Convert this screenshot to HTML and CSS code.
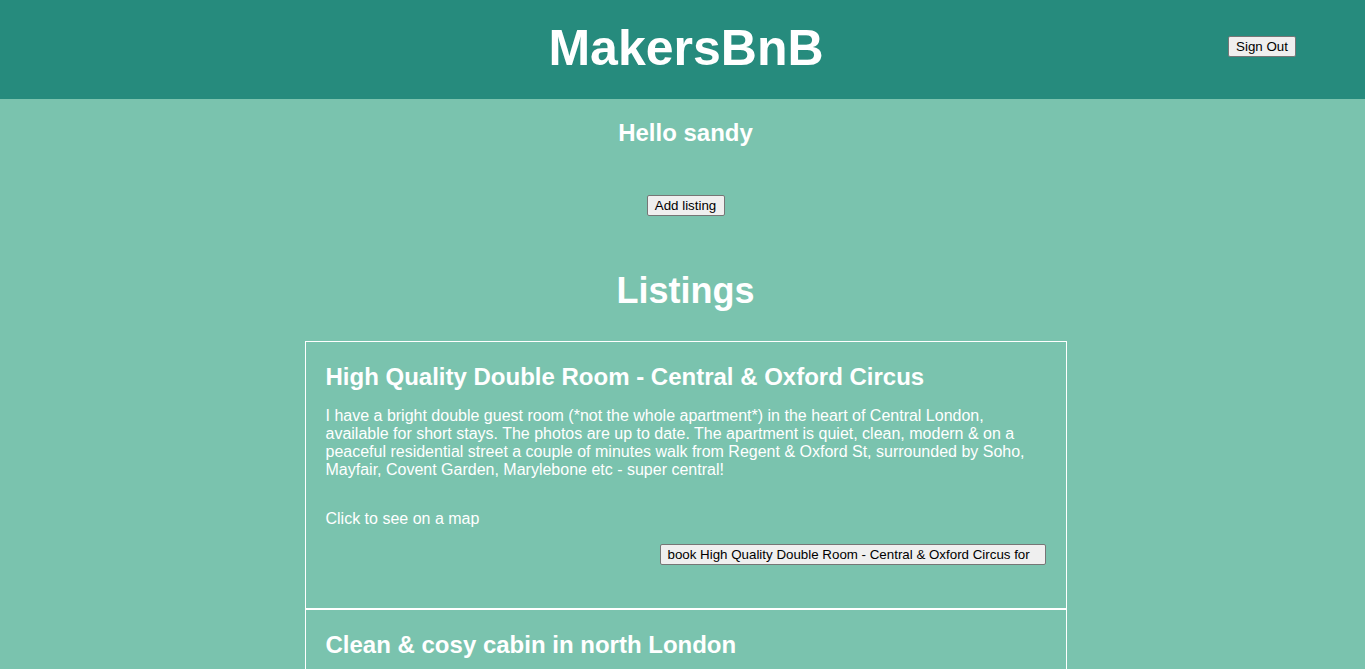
FILE: index.html
```html
<!DOCTYPE html>
<html>
<head>
<meta charset="utf-8">
<title>MakersBnB</title>
<link rel="stylesheet" href="styles.css">
</head>
<body>
<header class="topbar">
  <h1 class="brand">MakersBnB</h1>
  <button class="btn signout">Sign Out</button>
</header>
<main class="page">
  <h2 class="greeting">Hello sandy</h2>
  <div class="add-row"><button class="btn">Add listing</button></div>
  <h1 class="section-title">Listings</h1>
  <div class="listings">
    <article class="listing">
      <h2 class="listing-title">High Quality Double Room - Central &amp; Oxford Circus</h2>
      <p class="listing-desc">I have a bright double guest room (*not the whole apartment*) in the heart of Central London, available for short stays. The photos are up to date. The apartment is quiet, clean, modern &amp; on a peaceful residential street a couple of minutes walk from Regent &amp; Oxford St, surrounded by Soho, Mayfair, Covent Garden, Marylebone etc - super central!</p>
      <p class="listing-map">Click to see on a map</p>
      <div class="book-row"><button class="btn book">book High Quality Double Room - Central &amp; Oxford Circus for</button></div>
    </article>
    <article class="listing">
      <h2 class="listing-title">Clean &amp; cosy cabin in north London</h2>
      <p class="listing-desc">A lovely little cabin in a quiet garden in north London, close to the tube and local shops.</p>
      <p class="listing-map">Click to see on a map</p>
      <div class="book-row"><button class="btn book">book Clean &amp; cosy cabin in north London for</button></div>
    </article>
  </div>
</main>
</body>
</html>
```
FILE: styles.css
```css
html, body {
  margin: 0;
  padding: 0;
}
body {
  background: #7ac3ae;
  color: #ffffff;
  font-family: "Liberation Sans", Arial, Helvetica, sans-serif;
}
.topbar {
  background: #268b7d;
  height: 99px;
  display: flex;
  align-items: center;
  justify-content: center;
  padding-left: 7px;
  position: relative;
}
.brand {
  margin: 0;
  font-size: 50px;
  font-weight: bold;
  color: #ffffff;
  transform: translateY(-2px);
}
.btn {
  font-family: "Liberation Sans", Arial, Helvetica, sans-serif;
  font-size: 13.33px;
  color: #000000;
  background: #efefef;
  border: 1px solid #767676;
  border-radius: 2px;
  padding: 2px 7px;
  line-height: 15px;
  height: 21px;
}
.signout {
  position: absolute;
  left: 1228px;
  top: 36px;
  width: 68px;
  padding: 2px 0;
}
.page {
  display: flex;
  flex-direction: column;
  align-items: center;
  padding-left: 6px;
}
.greeting {
  margin: 20px 0 0;
  font-size: 24px;
  line-height: 28px;
  font-weight: bold;
}
.add-row {
  margin-top: 48px;
}
.add-row .btn {
  width: 78px;
  padding: 2px 0;
}
.section-title {
  margin: 54px 0 0;
  font-size: 36px;
  line-height: 41px;
  font-weight: bold;
}
.listings {
  margin-top: 30px;
  width: 762px;
}
.listing {
  border: 1px solid #ffffff;
  padding: 21px 20px 43px;
}
.listing-title {
  margin: 0 0 16px;
  font-size: 24px;
  line-height: 28px;
  font-weight: bold;
}
.listing-desc {
  margin: 0;
  font-size: 16px;
  line-height: 18px;
}
.listing-map {
  margin: 31px 0 0;
  font-size: 16px;
  line-height: 18px;
}
.book-row {
  margin-top: 16px;
  display: flex;
  justify-content: flex-end;
}
.book {
  width: 386px;
  text-align: left;
  white-space: nowrap;
  overflow: hidden;
}
```
